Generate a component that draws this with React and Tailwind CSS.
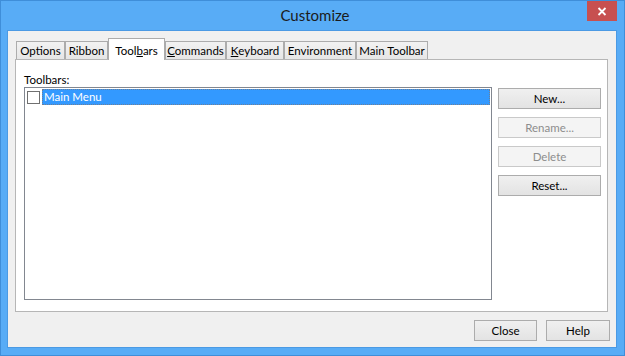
import React from 'react';

const font = { fontFamily: 'Lato, "Liberation Sans", sans-serif' };

const tabs = [
  { key: 'options', label: 'Options', w: 'w-[49px]' },
  { key: 'ribbon', label: 'Ribbon', w: 'w-[43px]' },
  { key: 'toolbars', label: <>Tool<u>b</u>ars</>, w: 'w-[57px]', active: true },
  { key: 'commands', label: <><u>C</u>ommands</>, w: 'w-[61px]' },
  { key: 'keyboard', label: <><u>K</u>eyboard</>, w: 'w-[58px]' },
  { key: 'environment', label: 'Environment', w: 'w-[72px]' },
  { key: 'main', label: 'Main Toolbar', w: 'w-[72px]' },
];

function Tab({ tab }) {
  if (tab.active) {
    return (
      <div className={`${tab.w} h-[22px] bg-white border border-b-0 border-[#acacac] flex items-start justify-center pt-[3px] whitespace-nowrap relative z-10`}>
        {tab.label}
      </div>
    );
  }
  return (
    <div className={`${tab.w} h-[18px] mb-[1px] bg-gradient-to-b from-[#f2f2f2] to-[#e6e6e6] border border-b-0 border-[#acacac] flex items-center justify-center whitespace-nowrap`}>
      {tab.label}
    </div>
  );
}

function Button({ children, disabled, className = '' }) {
  return (
    <button
      className={`h-[21px] border text-[11.5px] leading-none flex items-center justify-center ${
        disabled
          ? 'bg-[#f4f4f4] border-[#c9c9c9] text-[#8d8d8d]'
          : 'bg-gradient-to-b from-[#f0f0f0] to-[#e3e3e3] border-[#acacac] text-black'
      } ${className}`}
    >
      {children}
    </button>
  );
}

export default function App() {
  return (
    <div
      className="w-[625px] h-[356px] bg-[#58acf6] border border-[#3f8ed9] flex flex-col pl-[6px] pr-[7px] pb-[7px] relative text-black"
      style={font}
    >
      <div className="h-[29px] flex items-center justify-center text-[15px] text-[#1b1b1b] pl-[6px]">
        Customize
      </div>
      <button className="absolute top-0 right-[7px] w-[30px] h-[20px] bg-[#c75050] flex items-center justify-center">
        <svg width="10" height="9" viewBox="0 0 10 9">
          <path d="M1.5 1 L8.5 8 M8.5 1 L1.5 8" stroke="white" strokeWidth="1.8" fill="none" />
        </svg>
      </button>

      <div className="flex-1 border border-[#4b9ae4] bg-[#f0f0f0] flex flex-col text-[11.5px]">
        <div className="mt-[7px] ml-[8px] h-[22px] -mb-[1px] flex items-end relative z-10">
          {tabs.map(t => (
            <Tab key={t.key} tab={t} />
          ))}
        </div>

        <div className="ml-[7px] mr-[8px] h-[253px] bg-white border border-[#b6b6b6] pl-[8px] pt-[12px] flex flex-col">
          <div className="h-[15px] leading-[15px]">Toolbars:</div>
          <div className="flex">
            <div className="w-[468px] h-[213px] border border-[#828790] pt-[1px] pl-[2px] pr-[1px]">
              <div className="h-[16px] flex items-center">
                <div className="w-[13px] h-[13px] border border-[#707070] bg-white"></div>
                <div className="ml-[2px] flex-1 h-[16px] bg-[#3399ff] border border-dotted border-[#6f7f95] text-white flex items-center pl-[1px]">
                  Main Menu
                </div>
              </div>
            </div>
            <div className="ml-[6px] mt-[1px] w-[103px] flex flex-col gap-[8px]">
              <Button>New...</Button>
              <Button disabled>Rename...</Button>
              <Button disabled>Delete</Button>
              <Button>Reset...</Button>
            </div>
          </div>
        </div>

        <div className="mt-[8px] mr-[6px] flex justify-end gap-[9px]">
          <Button className="w-[63px]">Close</Button>
          <Button className="w-[64px]">Help</Button>
        </div>
      </div>
    </div>
  );
}
